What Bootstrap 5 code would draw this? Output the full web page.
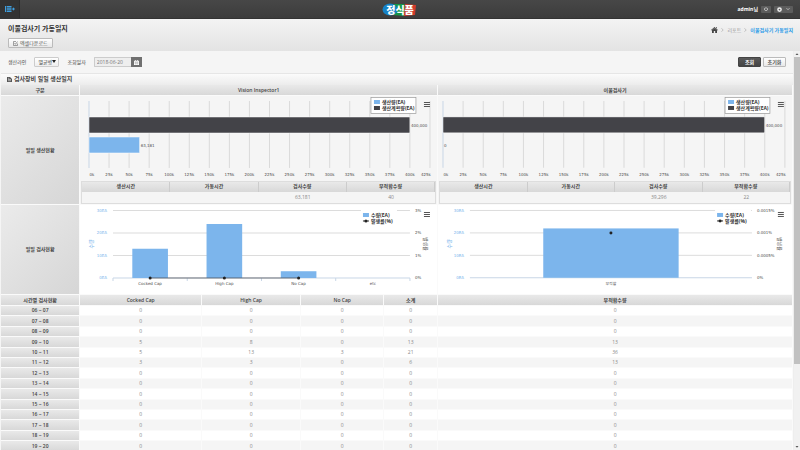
<!DOCTYPE html>
<html lang="ko">
<head>
<meta charset="utf-8">
<meta name="viewport" content="width=device-width, initial-scale=1">
<title>이물검사기 가동일지</title>
<link rel="stylesheet" href="https://cdn.jsdelivr.net/npm/bootstrap@5.3.0/dist/css/bootstrap.min.css">
<style>
body{font-family:"Open Sans","Noto Sans CJK KR",sans-serif;font-size:5px;line-height:8px;color:#444;background:#f5f5f5}
svg{display:block}
.topbar{height:19px;background:linear-gradient(#474747,#3c3c3c);border-bottom:1px solid #333}
.side-toggle{width:20px;height:18px;background:#333;border:0;border-right:1px solid #2c2c2c}
.brand-name{font:900 10px/15px "Noto Sans CJK KR",sans-serif;color:#fff;text-decoration:none;width:36px;height:15px}
.user-box{gap:3px;padding-right:7px}
.user-name{color:#fff;font-weight:700}
.top-btn{height:7px;padding:0 3px;border:0;border-radius:1px;background:#5c5c5c;color:#ddd}
.page-head{height:32px;background:linear-gradient(#f3f3f3,#e3e3e3);padding:5px 7px 0 8px}
.page-title{font-size:7px;line-height:10px;font-weight:700;color:#333}
.crumbs{font-size:5px;gap:3px;padding-top:2px}
.crumbs a{color:#999;text-decoration:none}
.crumbs .current{color:#2a9be8;font-weight:700}
.tool-btn{height:10px;font-size:5px;line-height:8px;border:1px solid #bbb;border-radius:1px;color:#555;background:linear-gradient(#fff,#e8e8e8)}
.tool-btn.dark-btn{background:linear-gradient(#5a5a5a,#444);border-color:#444;color:#fff}
.icon-gap{gap:2px}
.download{min-width:41px}
.action-btn{width:23px;font-weight:700}
.filters{height:23px;padding:0 7px 0 7px;border-bottom:1px solid #e6e6e6}
.pick{width:25px;height:10px;padding:0 1px 0 3px;font-size:5px;line-height:8px;border:1px solid #ccc;border-radius:1px;color:#444;appearance:none;background:linear-gradient(#fff,#eee)}
.pick-wrap svg{position:absolute;right:3px;top:3px;pointer-events:none}
.day{width:37px;height:10px;padding:0 2px;font-size:5px;line-height:8px;border:1px solid #ccc;border-right:0;border-radius:1px 0 0 1px;color:#777;background:#eee}
.cal-btn{width:11px;height:10px;border:0;background:#707070}
.section-head{height:11px;padding-left:6px;font-size:6px;font-weight:600;background:linear-gradient(#fbfbfb,#ececec)}
.scroll-rail{width:7px;background:#f1f1f1;border-left:1px solid #eee}
.scroll-thumb{height:77%;background:#c1c1c1}
.content{padding-left:1px}
.grid-table{table-layout:fixed;border-collapse:separate;border-spacing:0;text-align:center}
.grid-table th,.grid-table td{padding:0;vertical-align:middle;line-height:9px}
.grid-table th{background:linear-gradient(#e9e9e9,#d8d8d8);color:#444;font-weight:600}
.report>thead>tr>*,.report>tbody>tr>*{border-right:1px solid #fafafa;border-bottom:1px solid #fafafa}
.report>thead>tr>th{height:11px}
.report .sub-head th{height:11px}
.report .wide th{background:linear-gradient(135deg,#ebebeb,#d6d6d6)}
.report .totals th{background:linear-gradient(#e9e9e9,#d8d8d8)}
.report .bars>td{background:#f5f5f5;height:109px;vertical-align:top}
.report .checks>td{background:#fff;height:90px;vertical-align:top}
.hours tr>*{height:10px}
.hours tr:nth-child(5n+2)>*,.hours tr:nth-child(5n+4)>*{height:11px}
.hours td{background:#fff;color:#888}
.hours tr:nth-child(even) td{background:#f5f5f5}
.totals{margin:0 1px;border:1px solid #ddd}
.totals th{height:10px;border-right:1px solid #ccc}
.totals td{height:11px;color:#888}
.c-label{width:10%}.c-cocked{width:15.4%}.c-high{width:12.5%}.c-none{width:10.5%}.c-sum{width:6.8%}
.plot{width:100%;height:auto}
.plot text{font-family:"DejaVu Sans","Noto Sans CJK KR",sans-serif;font-size:4px;fill:#505050}
.plot .key{font-family:"Open Sans","Noto Sans CJK KR",sans-serif;font-size:5px;font-weight:700;fill:#333}
.plot .blue{fill:#7cb5ec}
.plot .axis-name{font-size:5px}
</style>
<script src="https://cdn.jsdelivr.net/npm/bootstrap@5.3.0/dist/js/bootstrap.bundle.min.js"></script>
</head>
<body class="vh-100 overflow-hidden d-flex flex-column">
<header class="topbar d-flex align-items-center justify-content-between flex-shrink-0 position-relative">
  <button class="side-toggle p-0 d-flex align-items-center justify-content-center" aria-label="메뉴">
    <svg width="10" height="7" viewBox="0 0 10 7" fill="#3f9fe0"><path d="M0 0h1v6H0zM1.600 0h4.900v1.600H1.600zM1.600 2.200h4.900v1.600H1.600zM1.600 4.400h4.900V6H1.600zM7 2.600h1V1.200L10 3 8 4.800V3.500H7z"/></svg>
  </button>
  <a href="#" class="brand-name position-absolute start-50 translate-middle-x text-center">
    <svg class="position-absolute top-0 start-0" width="36" height="15" viewBox="0 0 36 15"><path d="M12 2h10l4 6-3 6-12-1z" fill="#159447"/><ellipse cx="8" cy="7.500" rx="7.500" ry="6" fill="#1682c6"/><path d="M23 2l11 1-1 10-11 1z" fill="#d23a2c"/></svg>
    <span class="position-relative">정식품</span>
  </a>
  <div class="user-box d-flex align-items-center">
    <span class="user-name">admin님</span>
    <button class="top-btn d-flex align-items-center" aria-label="전원"><svg width="4" height="4" viewBox="0 0 4 4" fill="none" stroke="#ddd" stroke-width=".7"><path d="M1.100.8a1.600 1.600 0 1 0 1.800 0M2 .2v1.600"/></svg></button>
    <button class="top-btn d-flex align-items-center gap-1" aria-label="설정"><svg width="5" height="5" viewBox="0 0 4 4"><circle cx="2" cy="2" r="1.300" fill="none" stroke="#eee" stroke-width="1.200"/></svg><svg width="4" height="4" viewBox="0 0 4 4" fill="none" stroke="#ddd" stroke-width=".7"><path d="M.5 1.200L2 2.700l1.500-1.500"/></svg></button>
  </div>
</header>

<div class="page-head d-flex justify-content-between flex-shrink-0">
  <div>
    <h1 class="page-title mb-0">이물검사기 가동일지</h1>
    <button class="tool-btn download icon-gap d-flex align-items-center mt-1 px-1 py-0"><svg width="5" height="5" viewBox="0 0 5 5" fill="none" stroke="#666" stroke-width=".6"><path d="M4.500 2.500v2h-4v-4h2.500M1.500 2l1 1.300L4.500.5"/></svg>엑셀다운로드</button>
  </div>
  <nav aria-label="경로">
    <ol class="crumbs breadcrumb mb-0 align-items-center">
      <li><a href="#" aria-label="홈"><svg width="7" height="6" viewBox="0 0 7 6" fill="#444"><path d="M3.500 0L7 3l-.4.500L3.500.9.4 3.500 0 3zM5 .2h1V1.500L5 .8zM1 3.300l2.500-2L6 3.300V6H4.200V4H2.800v2H1z"/></svg></a></li>
      <li><svg width="3" height="4" viewBox="0 0 3 4" fill="none" stroke="#aaa" stroke-width=".7"><path d="M.5.3L2.200 2 .5 3.700"/></svg></li>
      <li><a href="#">리포트</a></li>
      <li><svg width="3" height="4" viewBox="0 0 3 4" fill="none" stroke="#aaa" stroke-width=".7"><path d="M.5.3L2.200 2 .5 3.700"/></svg></li>
      <li class="current">이물검사기 가동일지</li>
    </ol>
  </nav>
</div>

<div class="d-flex flex-grow-1 overflow-hidden">
<main class="content flex-grow-1 overflow-hidden">
  <form class="filters d-flex align-items-center">
    <label for="line" class="me-2">생산라인</label>
    <div class="pick-wrap position-relative me-2"><select id="line" class="pick d-block"><option>멸균병</option></select><svg width="4" height="3" viewBox="0 0 4 3"><path d="M0 0h4L2 3z" fill="#222"/></svg></div>
    <label for="day" class="me-2">조회일자</label>
    <div class="d-flex"><input id="day" class="day" type="text" value="2018-06-20"><button type="button" class="cal-btn p-0 d-flex align-items-center justify-content-center" aria-label="달력"><svg width="5" height="5" viewBox="0 0 5 5"><path d="M0 .7h5V5H0zM1 0h.7v1H1zM3.300 0H4v1h-.7z" fill="#fff"/><path d="M.5 2h4M.5 3.200h4M1.700 1.700v3M3.300 1.700v3" stroke="#777" stroke-width=".3"/></svg></button></div>
    <div class="ms-auto d-flex icon-gap">
      <button type="button" class="tool-btn dark-btn action-btn p-0">조회</button>
      <button type="button" class="tool-btn action-btn p-0">초기화</button>
    </div>
  </form>
  <h2 class="section-head icon-gap d-flex align-items-center mb-0"><svg width="5" height="5" viewBox="0 0 5 5"><path d="M0 0h3l2 2v3H0z" fill="#555"/><path d="M1 1.300h1.300M1 2.500h3M1 3.700h3" stroke="#fff" stroke-width=".5"/></svg>검사장비 일일 생산일지</h2>

  <table class="grid-table report w-100">
    <colgroup><col class="c-label"><col class="c-cocked"><col class="c-high"><col class="c-none"><col class="c-sum"><col></colgroup>
    <thead><tr><th>구분</th><th colspan="4">Vision Inspector1</th><th>이물검사기</th></tr></thead>
    <tbody>
      <tr class="wide bars"><th>일일 생산현황</th>
        <td colspan="4"><svg class="plot" id="outputA" viewBox="0 0 357 85"></svg>
          <div class="totals"><table class="grid-table w-100"><thead><tr><th>생산시간</th><th>가동시간</th><th>검사수량</th><th>부적합수량</th></tr></thead><tbody><tr><td></td><td></td><td>63,181</td><td>40</td></tr></tbody></table></div></td>
        <td><svg class="plot" id="outputB" viewBox="0 0 355 85"></svg>
          <div class="totals"><table class="grid-table w-100"><thead><tr><th>생산시간</th><th>가동시간</th><th>검사수량</th><th>부적합수량</th></tr></thead><tbody><tr><td></td><td></td><td>39,296</td><td>22</td></tr></tbody></table></div></td></tr>
      <tr class="wide checks"><th>일일 검사현황</th>
        <td colspan="4"><svg class="plot" id="checkA" viewBox="0 0 357 88"></svg></td>
        <td><svg class="plot" id="checkB" viewBox="0 0 355 88"></svg></td></tr>
      <tr class="sub-head"><th>시간별 검사현황</th><th>Cocked Cap</th><th>High Cap</th><th>No Cap</th><th>소계</th><th>부적합수량</th></tr>
    </tbody>
    <tbody class="hours" id="hours"></tbody>
  </table>
</main>
<div class="scroll-rail flex-shrink-0 d-flex flex-column" aria-hidden="true">
  <svg width="6" height="6" viewBox="0 0 6 6"><path d="M1.500 4L3 2.200 4.500 4z" fill="#555"/></svg>
  <div class="scroll-thumb"></div>
  <svg class="mt-auto" width="6" height="6" viewBox="0 0 6 6"><path d="M1.500 2L3 3.800 4.500 2z" fill="#555"/></svg>
</div>
</div>

<script>
const rect = (x, y, w, h, f, extra = '') => `<rect x="${x}" y="${y}" width="${w}" height="${h}" fill="${f}" ${extra}/>`;
const line = (x1, y1, x2, y2, c = '#dcdcdc') => `<path d="M${x1} ${y1}L${x2} ${y2}" stroke="${c}"/>`;
const text = (x, y, s, anchor = 'middle', cls = '', extra = '') => `<text x="${x}" y="${y}" text-anchor="${anchor}" class="${cls}" ${extra}>${s}</text>`;
const menu = (x, y) => [0, 2, 4].map(d => rect(x, y + d, 6, 1, '#555')).join('');
const BLUE = '#7cb5ec', DARK = '#434348';

// Planned and actual output, horizontal bars on a 0-425k scale
function outputChart(id, left, right, menuX, legendX, actual, label) {
  const step = (right - left) / 17, end = left + step * 16;
  let s = '';
  for (let i = 0; i <= 17; i++) {
    const x = left + step * i;
    s += line(x, 5, x, 72, i ? '#dadada' : '#c8d6e6');
    s += text(i === 0 ? x + 3 : i === 17 ? x - 4 : x, 80, i * 25 + 'k');
  }
  s += rect(left, 21, end - left, 16, DARK, 'stroke="#fff" stroke-width=".5"');
  s += text(end + 1, 31, '400,000', 'start');
  const w = actual / 25000 * step;
  if (w) s += rect(left, 41, w, 16, BLUE, 'stroke="#fff" stroke-width=".5"');
  s += text(left + w + 1, 51, label, 'start');
  s += rect(legendX, 1.5, 45, 16, '#fff', 'stroke="#999" stroke-width=".7"');
  s += rect(legendX + 3, 4, 6, 4, BLUE) + text(legendX + 11, 8, '생산량(EA)', 'start', 'key');
  s += rect(legendX + 3, 10, 6, 4, DARK) + text(legendX + 11, 14, '생산계획량(EA)', 'start', 'key');
  document.getElementById(id).innerHTML = s + menu(menuX, 6);
}
outputChart('outputA', 9, 350, 344, 291, 63181, '63,181');
outputChart('outputB', 5, 348, 341, 288, 0, '0');

// Rejected quantity (columns) with rate (line and points)
function checkChart(id, o) {
  let s = '';
  for (let i = 0; i < 4; i++) {
    const y = 73 - i * 22.5;
    s += line(o.left, y, o.right, y, i ? '#dcdcdc' : '#c8d6e6');
    s += text(o.left - 6, y + 1.5, i * 10 + 'EA', 'end', 'blue') + text(o.right + 5, y + 1.5, o.rates[i], 'start');
  }
  const slot = (o.right - o.left) / o.items.length, pts = [];
  if (o.items.length > 1) for (let i = 0; i <= o.items.length; i++) s += line(o.left + slot * i, 73, o.left + slot * i, 76, '#c8d6e6');
  o.items.forEach(([name, n, rate], i) => {
    const x = o.left + slot * (i + .5), h = n * 2.25;
    s += rect(x - slot * .24, 73 - h, slot * .48, h, BLUE) + text(x, 80, name);
    if (rate !== null) pts.push([x, 73 - rate * 22.5]);
  });
  s += `<polyline points="${pts.join(' ')}" fill="none" stroke="${DARK}" stroke-width=".7"/>`;
  pts.forEach(p => s += `<circle cx="${p[0]}" cy="${p[1]}" r="1.500" fill="#222"/>`);
  s += text(0, 0, '수량', 'middle', 'axis-name blue', `transform="translate(${o.nameX} 39) rotate(-90)"`);
  s += text(0, 0, '발생률', 'middle', 'axis-name', `transform="translate(${o.rateX} 39) rotate(90)"`);
  s += rect(o.legendX - 2, 5, 36, 15, '#fff');
  s += rect(o.legendX, 8, 6, 4, BLUE) + text(o.legendX + 8, 12, '수량(EA)', 'start', 'key');
  s += line(o.legendX, 16, o.legendX + 6, 16, '#222') + `<circle cx="${o.legendX + 3}" cy="16" r="1.500" fill="#222"/>` + text(o.legendX + 8, 18, '발생률(%)', 'start', 'key');
  document.getElementById(id).innerHTML = s + menu(o.menuX, 7);
}
checkChart('checkA', {left: 33, right: 330, nameX: 13, rateX: 344, legendX: 283, menuX: 344, rates: ['0%', '1%', '2%', '3%'],
  items: [['Cocked Cap', 13, 0], ['High Cap', 24, 0], ['No Cap', 3, 0], ['etc', 0, null]]});
checkChart('checkB', {left: 32, right: 315, nameX: 13, rateX: 341, legendX: 280, menuX: 341, rates: ['0%', '0.0005%', '0.001%', '0.0015%'],
  items: [['부적합', 22, 2]]});

const counts = {9: [5, 8, 0, 13, 13], 10: [5, 13, 3, 21, 36], 11: [3, 3, 0, 6, 13]};
const pad = n => String(n).padStart(2, '0');
let rows = '';
for (let h = 6; h < 20; h++)
  rows += `<tr><th>${pad(h)} ~ ${pad(h + 1)}</th>${(counts[h] || [0, 0, 0, 0, 0]).map(v => `<td>${v}</td>`).join('')}</tr>`;
document.getElementById('hours').innerHTML = rows;
</script>
</body>
</html>
